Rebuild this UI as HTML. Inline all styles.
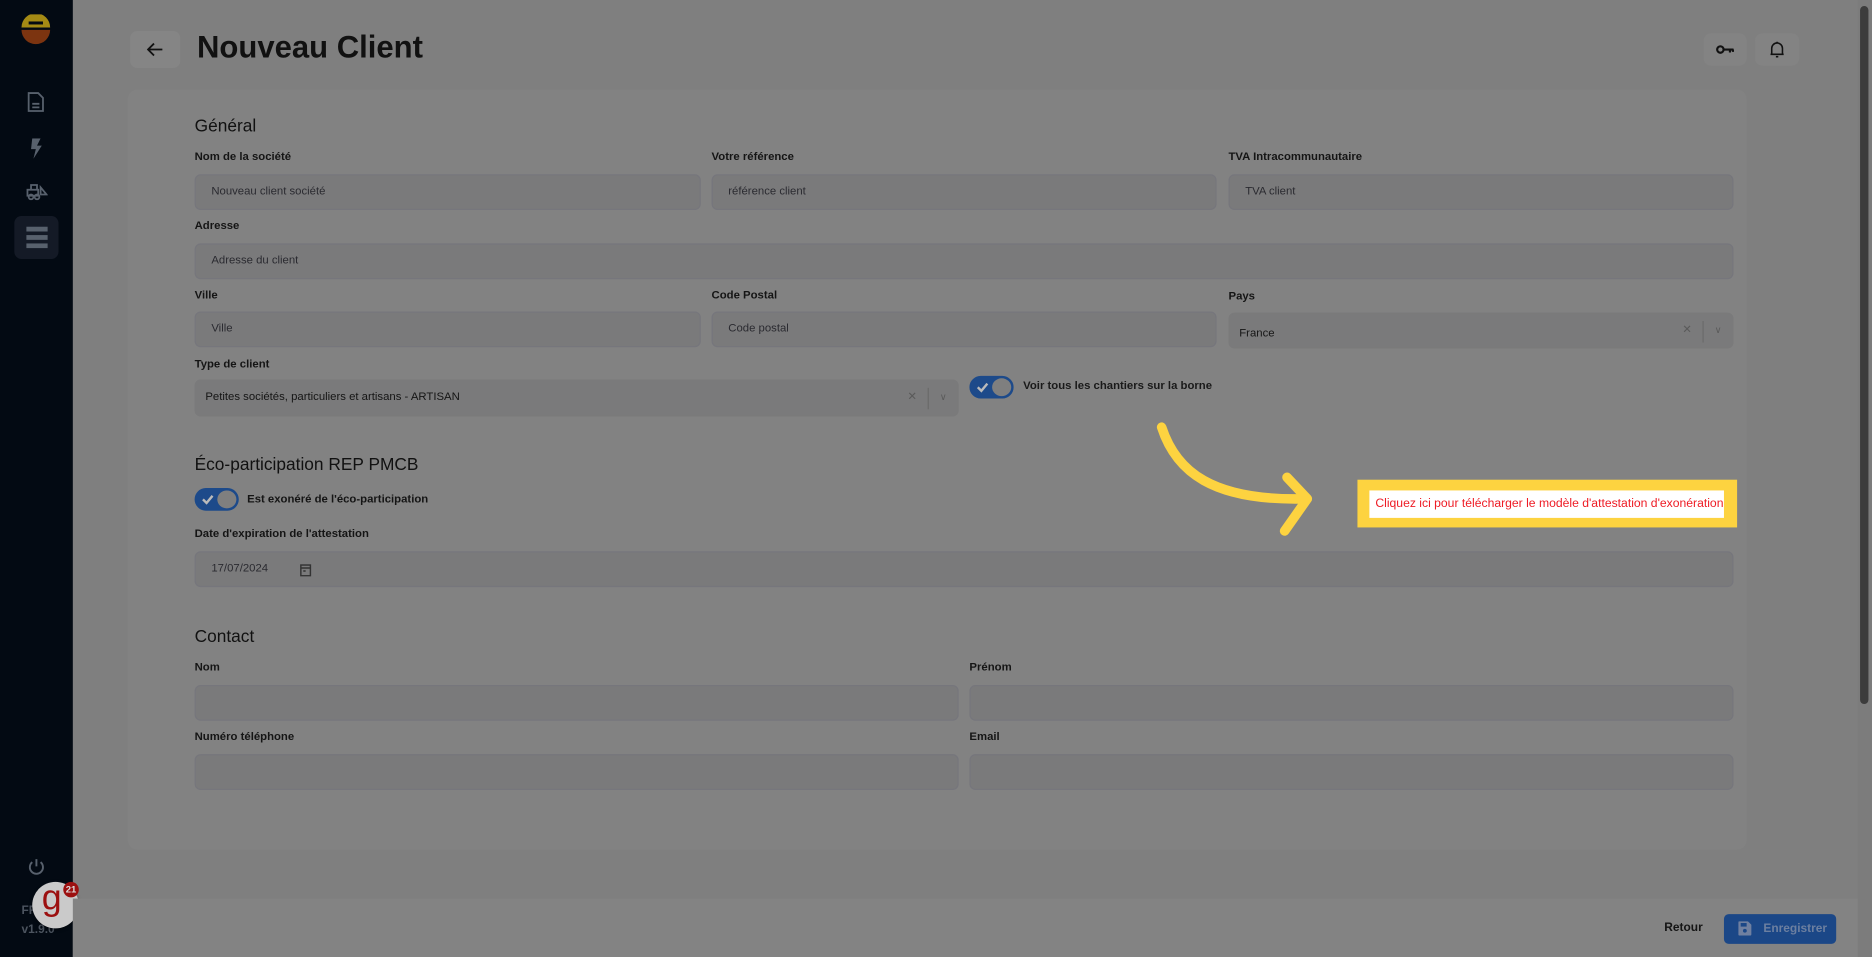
<!DOCTYPE html>
<html><head><meta charset="utf-8"><style>
*{box-sizing:border-box;margin:0;padding:0}
html,body{width:1872px;height:957px;overflow:hidden;background:#7f7f7f;font-family:"Liberation Sans",sans-serif}
#w{position:absolute;left:0;top:0;width:1568px;height:802px;transform:scale(1.19388,1.1933);transform-origin:0 0;background:#7f7f7f}
.a{position:absolute}
.lab{position:absolute;font-size:9.5px;font-weight:bold;color:#151515}
.inp{position:absolute;height:30px;background:#7a7a7b;border:1px solid #76767c;border-radius:5px;font-size:9.5px;color:#2a2a30;padding-left:13px;line-height:28px}
.sec{position:absolute;font-size:14.5px;color:#111}
.tog{position:absolute;width:37px;height:19px;border-radius:10px;background:#1d4a8a;border:1px solid #1d4a8a}
.tog:after{content:"";position:absolute;right:1px;top:1px;width:16px;height:15px;border-radius:50%;background:#7f7f7f}
.tog svg{position:absolute;left:5px;top:4px}
</style></head><body><div id="w">
<div class="a" style="left:0;top:0;width:61px;height:802px;background:#030a13"></div>
<svg class="a" style="left:17px;top:12px" width="26" height="26" viewBox="0 0 26 26"><path d="M1 11 A12 12 0 0 1 25 11 Z" fill="#a48a14"/><rect x="7" y="6" width="12" height="2.5" fill="#030a13"/><path d="M1 13 H25 A12 12 0 0 1 1 13 Z" fill="#7c3410"/></svg>
<svg class="a" style="left:23px;top:77px" width="14" height="17" viewBox="0 0 14 17" fill="none" stroke="#58616d" stroke-width="1.5"><path d="M1 1h8l4 4v11H1z"/><path d="M4 10h6M4 13h6"/></svg>
<svg class="a" style="left:24px;top:116px" width="12" height="17" viewBox="0 0 12 17"><path d="M3 0h7L7 6h4L4 17l2-8H2z" fill="#58616d"/></svg>
<svg class="a" style="left:22px;top:153px" width="18" height="15" viewBox="0 0 18 15" fill="none" stroke="#58616d" stroke-width="1.5"><rect x="1" y="6" width="9" height="5"/><path d="M4 6V2h5v4M12 4l5 6h-5z"/><circle cx="4" cy="12" r="2"/><circle cx="9" cy="12" r="2"/></svg>
<div class="a" style="left:12px;top:181px;width:37px;height:36px;background:#141a26;border-radius:6px"></div>
<svg class="a" style="left:22px;top:189px" width="18" height="19" viewBox="0 0 18 19"><rect y="1" width="18" height="4" fill="#58616d"/><rect y="8" width="18" height="4" fill="#58616d"/><rect y="15" width="18" height="4" fill="#58616d"/></svg>
<svg class="a" style="left:23px;top:719px" width="15" height="15" viewBox="0 0 15 15" fill="none" stroke="#58616d" stroke-width="1.6"><path d="M4 3.5a5.5 5.5 0 1 0 7 0M7.5 1v6"/></svg>
<div class="a" style="left:18px;top:758px;font-size:10px;font-weight:bold;color:#4c545f">FR</div>
<div class="a" style="left:18px;top:774px;font-size:10px;font-weight:bold;color:#4c545f">v1.9.0</div>
<div class="a" style="left:27px;top:739px;width:39px;height:39px;border-radius:50%;background:#cacaca;box-shadow:0 1px 3px rgba(0,0,0,.4)"></div>
<div class="a" style="left:35px;top:736px;font-size:30px;color:#9c1010;font-family:'Liberation Sans',sans-serif">g</div>
<div class="a" style="left:53px;top:739px;width:13px;height:13px;border-radius:50%;background:#9c1010;color:#ddd;font-size:8px;font-weight:bold;text-align:center;line-height:13px">21</div>

<div class="a" style="left:109px;top:26px;width:42px;height:31px;background:#858585;border-radius:6px"></div>
<svg class="a" style="left:123px;top:35px" width="14" height="13" viewBox="0 0 14 13" fill="none" stroke="#111" stroke-width="1.5"><path d="M13 6.5H1M6 1.5L1 6.5l5 5"/></svg>
<div class="a" style="left:165px;top:24px;font-size:26px;font-weight:bold;color:#111">Nouveau Client</div>
<div class="a" style="left:1427px;top:28px;width:36px;height:27px;background:#838383;border-radius:6px"></div>
<div class="a" style="left:1470px;top:28px;width:37px;height:27px;background:#838383;border-radius:6px"></div>
<svg class="a" style="left:1437px;top:37px" width="16" height="9" viewBox="0 0 16 9" fill="none" stroke="#111" stroke-width="1.8"><circle cx="4" cy="4.5" r="2.7"/><path d="M7 4.5h8M12 4.5v2.5M14.5 4.5v2"/></svg>
<svg class="a" style="left:1482px;top:34px" width="13" height="15" viewBox="0 0 13 15" fill="none" stroke="#111" stroke-width="1.3"><path d="M2 11V6.5a4.5 4.5 0 0 1 9 0V11M1 11.5h11M6.5 1v1M5.5 13.5h2"/></svg>
<div class="a" style="left:1556px;top:0;width:12px;height:802px;background:#7c7c7c"></div>
<div class="a" style="left:1558px;top:5px;width:7px;height:585px;background:#3c3c3c;border-radius:4px"></div>

<div class="a" style="left:107px;top:75px;width:1356px;height:637px;background:#828282;border-radius:8px"></div>
<div class="sec" style="left:163px;top:98px">Général</div>
<div class="lab" style="left:163px;top:126px">Nom de la société</div>
<div class="lab" style="left:596px;top:126px">Votre référence</div>
<div class="lab" style="left:1029px;top:126px">TVA Intracommunautaire</div>
<div class="inp" style="left:163px;top:146px;width:424px">Nouveau client société</div>
<div class="inp" style="left:596px;top:146px;width:423px">référence client</div>
<div class="inp" style="left:1029px;top:146px;width:423px">TVA client</div>
<div class="lab" style="left:163px;top:184px">Adresse</div>
<div class="inp" style="left:163px;top:204px;width:1289px">Adresse du client</div>
<div class="lab" style="left:163px;top:242px">Ville</div>
<div class="lab" style="left:596px;top:242px">Code Postal</div>
<div class="lab" style="left:1029px;top:243px">Pays</div>
<div class="inp" style="left:163px;top:261px;width:424px">Ville</div>
<div class="inp" style="left:596px;top:261px;width:423px">Code postal</div>
<div class="inp" style="left:1029px;top:262px;width:423px;border-color:#7a7a7b;padding-left:8px;line-height:34px;color:#151515">France<span style="position:absolute;right:34px;top:0;color:#5a5a5a;line-height:28px">✕</span><span style="position:absolute;right:24px;top:6px;height:18px;border-left:1px solid #6a6a6a"></span><span style="position:absolute;right:9px;top:0;color:#5a5a5a;line-height:28px;font-size:8px">∨</span></div>
<div class="lab" style="left:163px;top:300px">Type de client</div>
<div class="inp" style="left:163px;top:318px;width:640px;height:31px;border-color:#7a7a7b;padding-left:8px;color:#151515">Petites sociétés, particuliers et artisans - ARTISAN<span style="position:absolute;right:34px;top:0;color:#5a5a5a">✕</span><span style="position:absolute;right:24px;top:6px;height:18px;border-left:1px solid #6a6a6a"></span><span style="position:absolute;right:9px;top:0;color:#5a5a5a;font-size:8px">∨</span></div>
<div class="tog" style="left:812px;top:315px"><svg width="10" height="9" viewBox="0 0 10 9" fill="none" stroke="#bbb" stroke-width="2"><path d="M1 4.5l3 3 5-6"/></svg></div>
<div class="lab" style="left:857px;top:318px;color:#1a1a1a;font-weight:bold">Voir tous les chantiers sur la borne</div>

<div class="sec" style="left:163px;top:382px">Éco-participation REP PMCB</div>
<div class="tog" style="left:163px;top:409px"><svg width="10" height="9" viewBox="0 0 10 9" fill="none" stroke="#bbb" stroke-width="2"><path d="M1 4.5l3 3 5-6"/></svg></div>
<div class="lab" style="left:207px;top:413px">Est exonéré de l'éco-participation</div>
<div class="lab" style="left:163px;top:442px">Date d'expiration de l'attestation</div>
<div class="inp" style="left:163px;top:462px;width:1289px">17/07/2024
<svg style="position:absolute;left:87px;top:9px" width="10" height="11" viewBox="0 0 10 11" fill="none" stroke="#333" stroke-width="1.2"><rect x="1" y="1.5" width="8" height="9"/><path d="M1 4h8M3 6.5h2"/></svg></div>

<div class="sec" style="left:163px;top:526px">Contact</div>
<div class="lab" style="left:163px;top:554px">Nom</div>
<div class="lab" style="left:812px;top:554px">Prénom</div>
<div class="inp" style="left:163px;top:574px;width:640px"></div>
<div class="inp" style="left:812px;top:574px;width:640px"></div>
<div class="lab" style="left:163px;top:612px">Numéro téléphone</div>
<div class="lab" style="left:812px;top:612px">Email</div>
<div class="inp" style="left:163px;top:632px;width:640px"></div>
<div class="inp" style="left:812px;top:632px;width:640px"></div>

<div class="a" style="left:61px;top:753px;width:1495px;height:49px;background:#838383"></div>
<div class="a" style="left:1394px;top:772px;font-size:10px;font-weight:bold;color:#151515">Retour</div>
<div class="a" style="left:1444px;top:766px;width:94px;height:25px;background:#1b4787;border-radius:4px;font-size:10px;font-weight:bold;color:#6c7fa0;line-height:25px;padding-left:33px">Enregistrer</div>
<svg class="a" style="left:1456px;top:772px" width="11" height="12" viewBox="0 0 11 12"><path d="M0 1a1 1 0 0 1 1-1h7l3 3v8a1 1 0 0 1-1 1H1a1 1 0 0 1-1-1z" fill="#7080a0"/><rect x="2" y="1.5" width="5" height="3" fill="#1b4787"/><circle cx="5.5" cy="8" r="1.6" fill="#1b4787"/></svg>

<svg class="a" style="left:960px;top:345px" width="150" height="110" viewBox="0 0 150 110" fill="none" stroke="#fdd340" stroke-width="8" stroke-linecap="round" stroke-linejoin="round"><path d="M13 13C25 50 55 75 133 73"/><path d="M118 55L135 73L116 100"/></svg>
<div class="a" style="left:1137px;top:402px;width:318px;height:40px;background:#fdd340"></div>
<div class="a" style="left:1147px;top:411px;width:297px;height:23px;background:#fff;font-size:10.2px;color:#ee1c25;line-height:23px;padding-left:5px;white-space:nowrap;overflow:hidden">Cliquez ici pour télécharger le modèle d'attestation d'exonération</div>
</div></body></html>
